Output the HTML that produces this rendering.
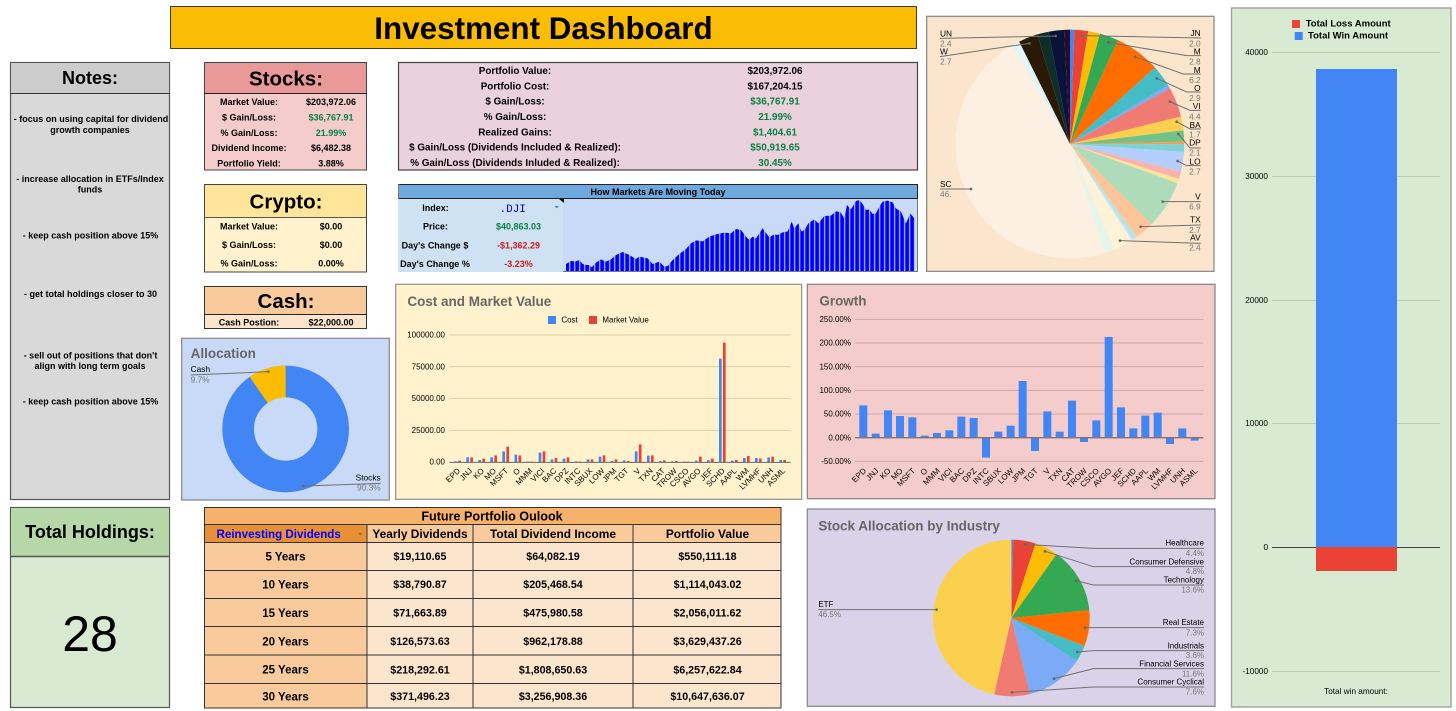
<!DOCTYPE html>
<html><head><meta charset="utf-8"><title>Investment Dashboard</title>
<style>
html,body{margin:0;padding:0;background:#fff;width:1456px;height:711px;overflow:hidden}
svg{display:block;filter:blur(.3px)}
text{font-family:"Liberation Sans",sans-serif;fill:#000}
.b{font-weight:700}
.m{text-anchor:middle}
.e{text-anchor:end}
.s{font-size:9px;font-weight:700}
.p{font-size:9.9px;font-weight:700;text-anchor:middle}
.g{fill:#0b8043}
.r{fill:#cc1f1a}
.t{font-size:10.7px;font-weight:700;text-anchor:middle}
.l{font-size:11.5px;font-weight:700;text-anchor:middle}
.c{font-size:11.9px;font-weight:700;text-anchor:middle}
.h{font-size:40.5px;font-weight:700;fill:#666}
.a{font-size:24px}
.v{font-size:24px;fill:#777}
.k{font-size:25px}
.kv{font-size:25px;fill:#777}
.ld{fill:none;stroke:#707070;stroke-width:3}
.d{fill:#666}
</style></head><body>
<svg width="1456" height="711" viewBox="0 0 1456 711" xmlns="http://www.w3.org/2000/svg">
<defs>
<pattern id="st" patternUnits="userSpaceOnUse" width="15" height="10" x="13"><rect width="11.5" height="10" fill="#0000f5"/><rect x="11.5" width="3.5" height="10" fill="#a9b6f5"/></pattern>
</defs>

<!-- Title -->
<rect x="170.5" y="6.5" width="746" height="42" fill="#fbbc04" stroke="#3c3c3c"/>
<text x="543.5" y="39" class="b m" style="font-size:31.4px">Investment Dashboard</text>

<!-- Notes -->
<rect x="10.5" y="62.5" width="159" height="437" fill="#d9d9d9" stroke="#555" stroke-width="1.2"/>
<rect x="11" y="63" width="158" height="30.5" fill="#cccccc"/>
<path d="M10 93.5H170" stroke="#333"/>
<text x="90" y="84" class="b m" style="font-size:18px">Notes:</text>
<text x="91" y="122" class="s m">- focus on using capital for dividend</text>
<text x="90" y="133" class="s m">growth companies</text>
<text x="90" y="182" class="s m">- increase allocation in ETFs/Index</text>
<text x="90" y="192.7" class="s m">funds</text>
<text x="90.5" y="238.7" class="s m">- keep cash position above 15%</text>
<text x="90.5" y="297" class="s m">- get total holdings closer to 30</text>
<text x="90.5" y="358.3" class="s m">- sell out of positions that don't</text>
<text x="90" y="369" class="s m">align with long term goals</text>
<text x="90.5" y="404.7" class="s m">- keep cash position above 15%</text>

<!-- Total holdings -->
<rect x="10.5" y="507.5" width="159" height="200" fill="#d9ead3" stroke="#555" stroke-width="1.2"/>
<rect x="11" y="508" width="158" height="48" fill="#b6d7a8"/>
<path d="M10 556.5H170" stroke="#555" stroke-width="1.4"/>
<text x="90" y="538" class="b m" style="font-size:18px">Total Holdings:</text>
<text x="90" y="651" class="m" style="font-size:50px">28</text>

<!-- Stocks -->
<rect x="204.5" y="62.5" width="162" height="107.5" fill="#f4cccc" stroke="#444"/>
<rect x="205" y="63" width="161" height="30.5" fill="#ea9999"/>
<path d="M204 93.5H367" stroke="#222"/>
<text x="286" y="85.5" class="b m" style="font-size:20.5px">Stocks:</text>
<text x="249" y="105" class="s m">Market Value:</text><text x="331" y="105" class="s m">$203,972.06</text>
<text x="249" y="120.5" class="s m">$ Gain/Loss:</text><text x="331" y="120.5" class="s m g">$36,767.91</text>
<text x="249" y="136" class="s m">% Gain/Loss:</text><text x="331" y="136" class="s m g">21.99%</text>
<text x="249" y="151" class="s m">Dividend Income:</text><text x="331" y="151" class="s m">$6,482.38</text>
<text x="249" y="166.5" class="s m">Portfolio Yield:</text><text x="331" y="166.5" class="s m">3.88%</text>

<!-- Crypto -->
<rect x="204.5" y="184.5" width="162" height="87.5" fill="#fff2cc" stroke="#444"/>
<rect x="205" y="185" width="161" height="32" fill="#ffe599"/>
<path d="M204 217.5H367" stroke="#555"/>
<text x="286" y="208.5" class="b m" style="font-size:20.5px">Crypto:</text>
<text x="249" y="229.7" class="s m">Market Value:</text><text x="331" y="229.7" class="s m">$0.00</text>
<text x="249" y="248" class="s m">$ Gain/Loss:</text><text x="331" y="248" class="s m">$0.00</text>
<text x="249" y="266.7" class="s m">% Gain/Loss:</text><text x="331" y="266.7" class="s m">0.00%</text>

<!-- Cash -->
<rect x="204.5" y="286.5" width="162" height="42" fill="#fce5cd" stroke="#333"/>
<rect x="205" y="287" width="161" height="27" fill="#f9cb9c"/>
<path d="M204 314.5H367" stroke="#222"/>
<text x="286" y="308" class="b m" style="font-size:20.5px">Cash:</text>
<text x="249" y="325.3" class="s m">Cash Postion:</text><text x="331" y="325.3" class="s m">$22,000.00</text>

<!-- Portfolio summary -->
<rect x="398.5" y="62.5" width="519" height="107.5" fill="#ead1dc" stroke="#444" stroke-width="1.2"/>
<text x="515" y="74" class="p">Portfolio Value:</text><text x="775" y="74" class="p">$203,972.06</text>
<text x="515" y="89.3" class="p">Portfolio Cost:</text><text x="775" y="89.3" class="p">$167,204.15</text>
<text x="515" y="104.7" class="p">$ Gain/Loss:</text><text x="775" y="104.7" class="p g">$36,767.91</text>
<text x="515" y="120" class="p">% Gain/Loss:</text><text x="775" y="120" class="p g">21.99%</text>
<text x="515" y="135.3" class="p">Realized Gains:</text><text x="775" y="135.3" class="p g">$1,404.61</text>
<text x="515" y="150.7" class="p">$ Gain/Loss (Dividends Included &amp; Realized):</text><text x="775" y="150.7" class="p g">$50,919.65</text>
<text x="515" y="166" class="p">% Gain/Loss (Dividends Inluded &amp; Realized):</text><text x="775" y="166" class="p g">30.45%</text>

<!-- Markets -->
<rect x="398" y="184" width="519.5" height="88" fill="#c9daf8"/>
<rect x="398" y="199" width="165" height="73" fill="#cfe2f3"/>
<rect x="398.5" y="184.5" width="519" height="14" fill="#6fa8dc" stroke="#222"/>
<path d="M398.5 184V199M563 271.5H917.5V199" fill="none" stroke="#777" stroke-width="1"/>
<text x="658" y="195" class="s m">How Markets Are Moving Today</text>
<text x="435.5" y="211" class="s m">Index:</text>
<text x="499.5" y="212" style="font-family:'Liberation Mono',monospace;font-size:11px;font-weight:400;fill:#0000ff">.DJI</text>
<path d="M554.5 206h4.6l-2.3 2.4z" fill="#4a86c8"/>
<polygon points="559,199 564,199 564,203" fill="#111"/>
<text x="435.5" y="229.5" class="s m">Price:</text><text x="518.5" y="229.5" class="s m g">$40,863.03</text>
<text x="435" y="248.3" class="s m">Day's Change $</text><text x="518.5" y="248.3" class="s m r">-$1,362.29</text>
<text x="435" y="266.8" class="s m">Day's Change %</text><text x="518.5" y="266.8" class="s m r">-3.23%</text>
<g transform="translate(561,190) scale(.3333,.3333)">
<polygon fill="url(#st)" points="15,222 30,213 45,214 55,210 65,222 75,225 85,225 92,232 105,218 120,208 135,215 150,208 165,195 185,186 205,195 225,207 235,200 260,205 275,222 295,215 310,230 320,228 335,210 355,192 375,177 390,160 405,151 425,154 445,140 465,133 490,128 510,130 525,117 540,120 555,140 565,150 575,140 585,145 605,115 625,142 640,133 650,135 665,127 680,124 692,95 700,115 712,100 722,125 732,118 742,100 760,88 772,100 790,78 810,77 825,64 838,66 850,85 858,45 870,58 885,33 895,30 905,42 915,60 925,58 935,72 945,70 955,50 965,35 980,32 995,37 1005,55 1020,65 1035,100 1048,70 1060,85 1060,243 15,243"/>
</g>

<!-- Top right pie -->
<g transform="translate(920,0) scale(.33333)">
<rect x="20" y="49" width="862" height="765" fill="#fce5cd" stroke="#8f8f8f" stroke-width="4"/>
<g transform="rotate(-90 450 432)" fill="none" stroke-width="343">
<circle cx="450" cy="432" r="171.5" pathLength="360" stroke="#4285f4" stroke-dasharray="2.3 360"/>
<circle cx="450" cy="432" r="171.5" pathLength="360" stroke="#ea4335" stroke-dasharray="6.9 360" stroke-dashoffset="-2.3"/>
<circle cx="450" cy="432" r="171.5" pathLength="360" stroke="#fbbc04" stroke-dasharray="6 360" stroke-dashoffset="-9.2"/>
<circle cx="450" cy="432" r="171.5" pathLength="360" stroke="#34a853" stroke-dasharray="9.7 360" stroke-dashoffset="-15.2"/>
<circle cx="450" cy="432" r="171.5" pathLength="360" stroke="#ff6d01" stroke-dasharray="23.1 360" stroke-dashoffset="-24.9"/>
<circle cx="450" cy="432" r="171.5" pathLength="360" stroke="#46bdc6" stroke-dasharray="11 360" stroke-dashoffset="-48"/>
<circle cx="450" cy="432" r="171.5" pathLength="360" stroke="#7baaf7" stroke-dasharray="1.8 360" stroke-dashoffset="-59"/>
<circle cx="450" cy="432" r="171.5" pathLength="360" stroke="#f07b72" stroke-dasharray="15.2 360" stroke-dashoffset="-60.8"/>
<circle cx="450" cy="432" r="171.5" pathLength="360" stroke="#fcd04f" stroke-dasharray="7 360" stroke-dashoffset="-76"/>
<circle cx="450" cy="432" r="171.5" pathLength="360" stroke="#71c287" stroke-dasharray="5.8 360" stroke-dashoffset="-83"/>
<circle cx="450" cy="432" r="171.5" pathLength="360" stroke="#ff994d" stroke-dasharray="1.2 360" stroke-dashoffset="-88.8"/>
<circle cx="450" cy="432" r="171.5" pathLength="360" stroke="#7ed1d7" stroke-dasharray="4 360" stroke-dashoffset="-90"/>
<circle cx="450" cy="432" r="171.5" pathLength="360" stroke="#b3cefb" stroke-dasharray="9.8 360" stroke-dashoffset="-94"/>
<circle cx="450" cy="432" r="171.5" pathLength="360" stroke="#f7b4ae" stroke-dasharray="4 360" stroke-dashoffset="-103.8"/>
<circle cx="450" cy="432" r="171.5" pathLength="360" stroke="#fde49b" stroke-dasharray="2.2 360" stroke-dashoffset="-107.8"/>
<circle cx="450" cy="432" r="171.5" pathLength="360" stroke="#aedcba" stroke-dasharray="24.4 360" stroke-dashoffset="-110"/>
<circle cx="450" cy="432" r="171.5" pathLength="360" stroke="#ffc599" stroke-dasharray="9.9 360" stroke-dashoffset="-134.4"/>
<circle cx="450" cy="432" r="171.5" pathLength="360" stroke="#b5e5e8" stroke-dasharray="2.3 360" stroke-dashoffset="-144.3"/>
<circle cx="450" cy="432" r="171.5" pathLength="360" stroke="#d9e6fc" stroke-dasharray=".9 360" stroke-dashoffset="-146.6"/>
<circle cx="450" cy="432" r="171.5" pathLength="360" stroke="#fef3d7" stroke-dasharray="9.7 360" stroke-dashoffset="-147.5"/>
<circle cx="450" cy="432" r="171.5" pathLength="360" stroke="#e6f4ea" stroke-dasharray="5.1 360" stroke-dashoffset="-157.2"/>
<circle cx="450" cy="432" r="171.5" pathLength="360" stroke="#fdf0e3" stroke-dasharray="166.8 360" stroke-dashoffset="-162.3"/>
<circle cx="450" cy="432" r="171.5" pathLength="360" stroke="#e3f5f6" stroke-dasharray="4.3 360" stroke-dashoffset="-329.1"/>
<circle cx="450" cy="432" r="171.5" pathLength="360" stroke="#2a1a05" stroke-dasharray="9.8 360" stroke-dashoffset="-333.4"/>
<circle cx="450" cy="432" r="171.5" pathLength="360" stroke="#0d2e2a" stroke-dasharray="5.8 360" stroke-dashoffset="-343.2"/>
<circle cx="450" cy="432" r="171.5" pathLength="360" stroke="#08123a" stroke-dasharray="7.7 360" stroke-dashoffset="-349"/>
<circle cx="450" cy="432" r="171.5" pathLength="360" stroke="#2a0c2a" stroke-dasharray="3.3 360" stroke-dashoffset="-356.7"/>
</g>
<path class="ld" d="M842 114L485 107M842 167H800L565 127M842 222H790L645 170M842 276H800L710 235M842 331H810L750 305M842 387H810L770 365M842 444H810L775 402M842 497H800L773 483M842 605H728M842 675L662 680M842 730L600 722M60 115L407 108M60 170L328 130M60 567H153"/>
<g class="d"><circle cx="485" cy="107" r="4"/><circle cx="565" cy="127" r="4"/><circle cx="645" cy="170" r="4"/><circle cx="710" cy="235" r="4"/><circle cx="750" cy="305" r="4"/><circle cx="770" cy="365" r="4"/><circle cx="775" cy="402" r="4"/><circle cx="773" cy="483" r="4"/><circle cx="728" cy="605" r="4"/><circle cx="662" cy="680" r="4"/><circle cx="600" cy="722" r="4"/><circle cx="407" cy="108" r="4"/><circle cx="328" cy="130" r="4"/><circle cx="153" cy="567" r="4"/></g>
<text x="842" y="108" class="k e">JN</text><text x="842" y="140" class="kv e">2.0</text>
<text x="842" y="163" class="k e">M</text><text x="842" y="194" class="kv e">2.8</text>
<text x="842" y="219" class="k e">M</text><text x="842" y="249" class="kv e">6.2</text>
<text x="842" y="273" class="k e">O</text><text x="842" y="303" class="kv e">2.9</text>
<text x="842" y="327" class="k e">VI</text><text x="842" y="359" class="kv e">4.4</text>
<text x="842" y="384" class="k e">BA</text><text x="842" y="413" class="kv e">1.7</text>
<text x="842" y="437" class="k e">DP</text><text x="842" y="467" class="kv e">2.1</text>
<text x="842" y="493" class="k e">LO</text><text x="842" y="523" class="kv e">2.7</text>
<text x="842" y="599" class="k e">V</text><text x="842" y="629" class="kv e">6.9</text>
<text x="842" y="667" class="k e">TX</text><text x="842" y="699" class="kv e">2.7</text>
<text x="842" y="722" class="k e">AV</text><text x="842" y="752" class="kv e">2.4</text>
<text x="60" y="109" class="k">UN</text><text x="60" y="140" class="kv">2.4</text>
<text x="60" y="164" class="k">W</text><text x="60" y="194" class="kv">2.7</text>
<text x="60" y="561" class="k">SC</text><text x="60" y="591" class="kv">46.</text>
</g>

<!-- Right panel -->
<rect x="1231.5" y="8" width="219.5" height="699" fill="#d9ead3" stroke="#a0a0a0" stroke-width="1.4"/>
<rect x="1292" y="20" width="8" height="8" fill="#ea4335"/>
<rect x="1294.7" y="32" width="8" height="8" fill="#4285f4"/>
<text x="1305.7" y="26.7" class="b" style="font-size:9.5px">Total Loss Amount</text>
<text x="1308" y="38.7" class="b" style="font-size:9.5px">Total Win Amount</text>
<path d="M1272 52.5H1440M1272 176.5H1440M1272 300.5H1440M1272 423.5H1440M1272 671.5H1440" stroke="#bdcbb5" stroke-width="1"/>
<rect x="1316" y="69" width="81" height="478" fill="#4285f4"/>
<rect x="1316" y="547" width="81" height="24" fill="#ea4335"/>
<path d="M1272 547.5H1316M1397 547.5H1440" stroke="#444" stroke-width="1"/>
<text x="1268" y="55" class="e" style="font-size:8.2px">40000</text>
<text x="1268" y="179" class="e" style="font-size:8.2px">30000</text>
<text x="1268" y="303" class="e" style="font-size:8.2px">20000</text>
<text x="1268" y="426" class="e" style="font-size:8.2px">10000</text>
<text x="1268" y="550" class="e" style="font-size:8.2px">0</text>
<text x="1268" y="674" class="e" style="font-size:8.2px">-10000</text>
<text x="1356" y="694" class="m" style="font-size:8.2px">Total win amount:</text>

<!-- Allocation donut -->
<g transform="translate(0,330) scale(.33333)">
<rect x="545" y="25" width="623" height="485" fill="#c9daf8" stroke="#8f8f8f" stroke-width="4"/>
<text x="572" y="84" class="h">Allocation</text>
<g transform="rotate(-90 857 297)" fill="none" stroke-width="95">
<circle cx="857" cy="297" r="142.5" pathLength="360" stroke="#4285f4"/>
<circle cx="857" cy="297" r="142.5" pathLength="360" stroke="#fbbc04" stroke-dasharray="35 360" stroke-dashoffset="-325"/>
</g>
<path class="ld" d="M572 135L805 125M1142 460L910 468"/>
<circle class="d" cx="805" cy="125" r="4"/><circle class="d" cx="910" cy="468" r="4"/>
<text x="572" y="126" style="font-size:25px">Cash</text>
<text x="572" y="157" style="font-size:25px;fill:#777">9.7%</text>
<text x="1142" y="452" class="e" style="font-size:25px">Stocks</text>
<text x="1142" y="482" class="e" style="font-size:25px;fill:#777">90.3%</text>
</g>

<!-- Cost chart -->
<g transform="translate(390,280) scale(.33333)">
<rect x="17" y="13" width="1218" height="645" fill="#fff2cc" stroke="#999" stroke-width="4"/>
<text x="52" y="78" class="h">Cost and Market Value</text>
<rect x="474" y="108" width="24" height="24" fill="#4285f4"/><text x="514" y="128" class="a">Cost</text>
<rect x="597" y="108" width="24" height="24" fill="#ea4335"/><text x="637" y="128" class="a">Market Value</text>
<path d="M178 165H1202M178 260H1202M178 355H1202M178 451H1202" stroke="#d8cfa6" stroke-width="3"/>
<path fill="#4285f4" d="M193 544V546h8V544zM229 532V546h8V532zM265 540V546h8V540zM301 532V546h8V532zM337 514V546h8V514zM373.5 524V546h8V524zM410 545V546h8V545zM446 518V546h8V518zM482 538V546h8V538zM518 536V546h8V536zM554 544V546h8V544zM590 538V546h8V538zM626 530V546h8V530zM662 543V546h8V543zM698.5 541V546h8V541zM734.5 514V546h8V514zM771 527V546h8V527zM807 543V546h8V543zM843 544V546h8V544zM879 545V546h8V545zM915 542V546h8V542zM951 540V546h8V540zM987 236V546h8V236zM1023 542V546h8V542zM1059 534V546h8V534zM1095 534V546h8V534zM1132 532V546h8V532zM1168 540V546h8V540z"/>
<path fill="#ea4335" d="M205 542V546h8V542zM241 532V546h8V532zM277 536V546h8V536zM313 526V546h8V526zM349 500V546h8V500zM385.5 526V546h8V526zM422 545V546h8V545zM458 514V546h8V514zM494 534V546h8V534zM530 532V546h8V532zM566 545V546h8V545zM602 538V546h8V538zM638 526V546h8V526zM674 538V546h8V538zM710.5 543V546h8V543zM746.5 493V546h8V493zM783 526V546h8V526zM819 541V546h8V541zM855 543V546h8V543zM891 545V546h8V545zM927 530V546h8V530zM963 536V546h8V536zM999 188V546h8V188zM1035 540V546h8V540zM1071 528V546h8V528zM1107 536V546h8V536zM1144 530V546h8V530zM1180 540V546h8V540z"/>
<path d="M178 547H1202" stroke="#666" stroke-width="3"/>
<text x="165" y="173" class="a e">100000.00</text>
<text x="165" y="268" class="a e">75000.00</text>
<text x="165" y="363" class="a e">50000.00</text>
<text x="165" y="459" class="a e">25000.00</text>
<text x="165" y="554" class="a e">0.00</text>
<text x="212" y="574" class="a e" transform="rotate(-45 212 574)">EPD</text>
<text x="248" y="574" class="a e" transform="rotate(-45 248 574)">JNJ</text>
<text x="284" y="574" class="a e" transform="rotate(-45 284 574)">KO</text>
<text x="320" y="574" class="a e" transform="rotate(-45 320 574)">MO</text>
<text x="356" y="574" class="a e" transform="rotate(-45 356 574)">MSFT</text>
<text x="392" y="574" class="a e" transform="rotate(-45 392 574)">O</text>
<text x="429" y="574" class="a e" transform="rotate(-45 429 574)">MMM</text>
<text x="465" y="574" class="a e" transform="rotate(-45 465 574)">VICI</text>
<text x="501" y="574" class="a e" transform="rotate(-45 501 574)">BAC</text>
<text x="537" y="574" class="a e" transform="rotate(-45 537 574)">DPZ</text>
<text x="573" y="574" class="a e" transform="rotate(-45 573 574)">INTC</text>
<text x="609" y="574" class="a e" transform="rotate(-45 609 574)">SBUX</text>
<text x="645" y="574" class="a e" transform="rotate(-45 645 574)">LOW</text>
<text x="681" y="574" class="a e" transform="rotate(-45 681 574)">JPM</text>
<text x="717" y="574" class="a e" transform="rotate(-45 717 574)">TGT</text>
<text x="753" y="574" class="a e" transform="rotate(-45 753 574)">V</text>
<text x="790" y="574" class="a e" transform="rotate(-45 790 574)">TXN</text>
<text x="826" y="574" class="a e" transform="rotate(-45 826 574)">CAT</text>
<text x="862" y="574" class="a e" transform="rotate(-45 862 574)">TROW</text>
<text x="898" y="574" class="a e" transform="rotate(-45 898 574)">CSCO</text>
<text x="934" y="574" class="a e" transform="rotate(-45 934 574)">AVGO</text>
<text x="970" y="574" class="a e" transform="rotate(-45 970 574)">JEF</text>
<text x="1006" y="574" class="a e" transform="rotate(-45 1006 574)">SCHD</text>
<text x="1042" y="574" class="a e" transform="rotate(-45 1042 574)">AAPL</text>
<text x="1078" y="574" class="a e" transform="rotate(-45 1078 574)">WM</text>
<text x="1114" y="574" class="a e" transform="rotate(-45 1114 574)">LVMHF</text>
<text x="1151" y="574" class="a e" transform="rotate(-45 1151 574)">UNH</text>
<text x="1187" y="574" class="a e" transform="rotate(-45 1187 574)">ASML</text>
</g>

<!-- Growth chart -->
<g transform="translate(800,280) scale(.33333)">
<rect x="22" y="13" width="1223" height="643" fill="#f4cccc" stroke="#8a8a8a" stroke-width="4"/>
<text x="58" y="77" class="h">Growth</text>
<path d="M165 118H1210M165 189H1210M165 260H1210M165 331H1210M165 402H1210M165 544H1210" stroke="#cfa6a6" stroke-width="3"/>
<path fill="#4285f4" d="M178 376V473h24V376zM215 461V473h24V461zM252 391V473h24V391zM288 408V473h24V408zM325 412V473h24V412zM362 467V473h24V467zM399 459V473h24V459zM436 451V473h24V451zM472 410V473h24V410zM509 414V473h24V414zM546 533V473h24V533zM583 455V473h24V455zM620 437V473h24V437zM656 303V473h24V303zM693 513V473h24V513zM730 394V473h24V394zM767 455V473h24V455zM804 362V473h24V362zM840 486V473h24V486zM877 421V473h24V421zM914 171V473h24V171zM951 382V473h24V382zM988 445V473h24V445zM1024 407V473h24V407zM1061 398V473h24V398zM1098 492V473h24V492zM1135 445V473h24V445zM1172 482V473h24V482z"/>
<path d="M165 473H1210" stroke="#8a6f6f" stroke-width="4"/>
<text x="153" y="126" class="a e">250.00%</text>
<text x="153" y="197" class="a e">200.00%</text>
<text x="153" y="268" class="a e">150.00%</text>
<text x="153" y="339" class="a e">100.00%</text>
<text x="153" y="410" class="a e">50.00%</text>
<text x="153" y="481" class="a e">0.00%</text>
<text x="153" y="552" class="a e">-50.00%</text>
<text x="200" y="574" class="a e" transform="rotate(-45 200 574)">EPD</text>
<text x="237" y="574" class="a e" transform="rotate(-45 237 574)">JNJ</text>
<text x="274" y="574" class="a e" transform="rotate(-45 274 574)">KO</text>
<text x="310" y="574" class="a e" transform="rotate(-45 310 574)">MO</text>
<text x="347" y="574" class="a e" transform="rotate(-45 347 574)">MSFT</text>
<text x="384" y="574" class="a e" transform="rotate(-45 384 574)">O</text>
<text x="421" y="574" class="a e" transform="rotate(-45 421 574)">MMM</text>
<text x="458" y="574" class="a e" transform="rotate(-45 458 574)">VICI</text>
<text x="494" y="574" class="a e" transform="rotate(-45 494 574)">BAC</text>
<text x="531" y="574" class="a e" transform="rotate(-45 531 574)">DPZ</text>
<text x="568" y="574" class="a e" transform="rotate(-45 568 574)">INTC</text>
<text x="605" y="574" class="a e" transform="rotate(-45 605 574)">SBUX</text>
<text x="642" y="574" class="a e" transform="rotate(-45 642 574)">LOW</text>
<text x="678" y="574" class="a e" transform="rotate(-45 678 574)">JPM</text>
<text x="715" y="574" class="a e" transform="rotate(-45 715 574)">TGT</text>
<text x="752" y="574" class="a e" transform="rotate(-45 752 574)">V</text>
<text x="789" y="574" class="a e" transform="rotate(-45 789 574)">TXN</text>
<text x="826" y="574" class="a e" transform="rotate(-45 826 574)">CAT</text>
<text x="862" y="574" class="a e" transform="rotate(-45 862 574)">TROW</text>
<text x="899" y="574" class="a e" transform="rotate(-45 899 574)">CSCO</text>
<text x="936" y="574" class="a e" transform="rotate(-45 936 574)">AVGO</text>
<text x="973" y="574" class="a e" transform="rotate(-45 973 574)">JEF</text>
<text x="1010" y="574" class="a e" transform="rotate(-45 1010 574)">SCHD</text>
<text x="1046" y="574" class="a e" transform="rotate(-45 1046 574)">AAPL</text>
<text x="1083" y="574" class="a e" transform="rotate(-45 1083 574)">WM</text>
<text x="1120" y="574" class="a e" transform="rotate(-45 1120 574)">LVMHF</text>
<text x="1157" y="574" class="a e" transform="rotate(-45 1157 574)">UNH</text>
<text x="1194" y="574" class="a e" transform="rotate(-45 1194 574)">ASML</text>
</g>

<!-- Industry pie -->
<g transform="translate(800,505) scale(.33333)">
<rect x="22" y="12" width="1223" height="592" fill="#d9d2e9" stroke="#8f8f8f" stroke-width="4"/>
<text x="55" y="76" class="h">Stock Allocation by Industry</text>
<g transform="rotate(-90 634 339)" fill="none" stroke-width="235">
<circle cx="634" cy="339" r="117.5" pathLength="360" stroke="#4285f4" stroke-dasharray="1.5 360"/>
<circle cx="634" cy="339" r="117.5" pathLength="360" stroke="#ea4335" stroke-dasharray="16.5 360" stroke-dashoffset="-1.5"/>
<circle cx="634" cy="339" r="117.5" pathLength="360" stroke="#fbbc04" stroke-dasharray="17.3 360" stroke-dashoffset="-18"/>
<circle cx="634" cy="339" r="117.5" pathLength="360" stroke="#34a853" stroke-dasharray="48.7 360" stroke-dashoffset="-35.3"/>
<circle cx="634" cy="339" r="117.5" pathLength="360" stroke="#ff6d01" stroke-dasharray="26.8 360" stroke-dashoffset="-84"/>
<circle cx="634" cy="339" r="117.5" pathLength="360" stroke="#46bdc6" stroke-dasharray="12.5 360" stroke-dashoffset="-110.8"/>
<circle cx="634" cy="339" r="117.5" pathLength="360" stroke="#7baaf7" stroke-dasharray="42.7 360" stroke-dashoffset="-123.3"/>
<circle cx="634" cy="339" r="117.5" pathLength="360" stroke="#f07b72" stroke-dasharray="26.5 360" stroke-dashoffset="-166"/>
<circle cx="634" cy="339" r="117.5" pathLength="360" stroke="#fcd04f" stroke-dasharray="167.5 360" stroke-dashoffset="-192.5"/>
</g>
<path class="ld" d="M1212 130H880L675 118M1212 185H880L735 139M1212 240H880L828 227M1212 368H855M1212 437H880L832 441M1212 491H880L762 521M1212 546H880L636 562M55 314H410"/>
<g class="d"><circle cx="675" cy="118" r="4"/><circle cx="735" cy="139" r="4"/><circle cx="828" cy="227" r="4"/><circle cx="855" cy="368" r="4"/><circle cx="832" cy="441" r="4"/><circle cx="762" cy="521" r="4"/><circle cx="636" cy="562" r="4"/><circle cx="410" cy="314" r="4"/></g>
<text x="1212" y="122" class="a e">Healthcare</text><text x="1212" y="153" class="v e">4.4%</text>
<text x="1212" y="178" class="a e">Consumer Defensive</text><text x="1212" y="207" class="v e">4.8%</text>
<text x="1212" y="233" class="a e">Technology</text><text x="1212" y="263" class="v e">13.6%</text>
<text x="1212" y="360" class="a e">Real Estate</text><text x="1212" y="392" class="v e">7.3%</text>
<text x="1212" y="430" class="a e">Industrials</text><text x="1212" y="459" class="v e">3.6%</text>
<text x="1212" y="484" class="a e">Financial Services</text><text x="1212" y="515" class="v e">11.6%</text>
<text x="1212" y="539" class="a e">Consumer Cyclical</text><text x="1212" y="569" class="v e">7.6%</text>
<text x="55" y="306" class="a">ETF</text><text x="55" y="336" class="v">46.5%</text>
</g>

<!-- Future table -->
<rect x="204" y="507" width="577" height="201" fill="#fce5cd"/>
<rect x="204" y="507" width="577" height="17.5" fill="#f6b26b"/>
<rect x="204" y="524.5" width="163" height="18" fill="#e69138"/>
<rect x="367" y="524.5" width="414" height="18" fill="#f9cb9c"/>
<rect x="204" y="542.5" width="163" height="165.5" fill="#f9cb9c"/>
<path d="M204 507.5H781M204 524.5H781M204 542.5H781M204 570.5H781M204 598.5H781M204 626.5H781M204 655H781M204 683.5H781M204 708H781M204.5 507V708M367 524V708M473 524V708M633 524V708M781 507V708" fill="none" stroke="#333" stroke-width="1"/>
<text x="492" y="520.5" class="b m" style="font-size:12.6px">Future Portfolio Oulook</text>
<text x="216.5" y="538" style="font-size:11.6px;font-weight:700;fill:#0000ff">Reinvesting Dividends</text>
<path d="M358 533h4.4l-2.2 2.4z" fill="#a0622a"/>
<text x="420" y="538" class="c">Yearly Dividends</text>
<text x="553" y="538" class="c">Total Dividend Income</text>
<text x="707.5" y="538" class="c">Portfolio Value</text>
<text x="285.5" y="560.7" class="l">5 Years</text><text x="420" y="560" class="t">$19,110.65</text><text x="553" y="560" class="t">$64,082.19</text><text x="707.5" y="560" class="t">$550,111.18</text>
<text x="285.5" y="588.7" class="l">10 Years</text><text x="420" y="588" class="t">$38,790.87</text><text x="553" y="588" class="t">$205,468.54</text><text x="707.5" y="588" class="t">$1,114,043.02</text>
<text x="285.5" y="617" class="l">15 Years</text><text x="420" y="616.5" class="t">$71,663.89</text><text x="553" y="616.5" class="t">$475,980.58</text><text x="707.5" y="616.5" class="t">$2,056,011.62</text>
<text x="285.5" y="645.3" class="l">20 Years</text><text x="420" y="645" class="t">$126,573.63</text><text x="553" y="645" class="t">$962,178.88</text><text x="707.5" y="645" class="t">$3,629,437.26</text>
<text x="285.5" y="673.7" class="l">25 Years</text><text x="420" y="673.3" class="t">$218,292.61</text><text x="553" y="673.3" class="t">$1,808,650.63</text><text x="707.5" y="673.3" class="t">$6,257,622.84</text>
<text x="285.5" y="700.7" class="l">30 Years</text><text x="420" y="700" class="t">$371,496.23</text><text x="553" y="700" class="t">$3,256,908.36</text><text x="707.5" y="700" class="t">$10,647,636.07</text>
</svg>
</body></html>
